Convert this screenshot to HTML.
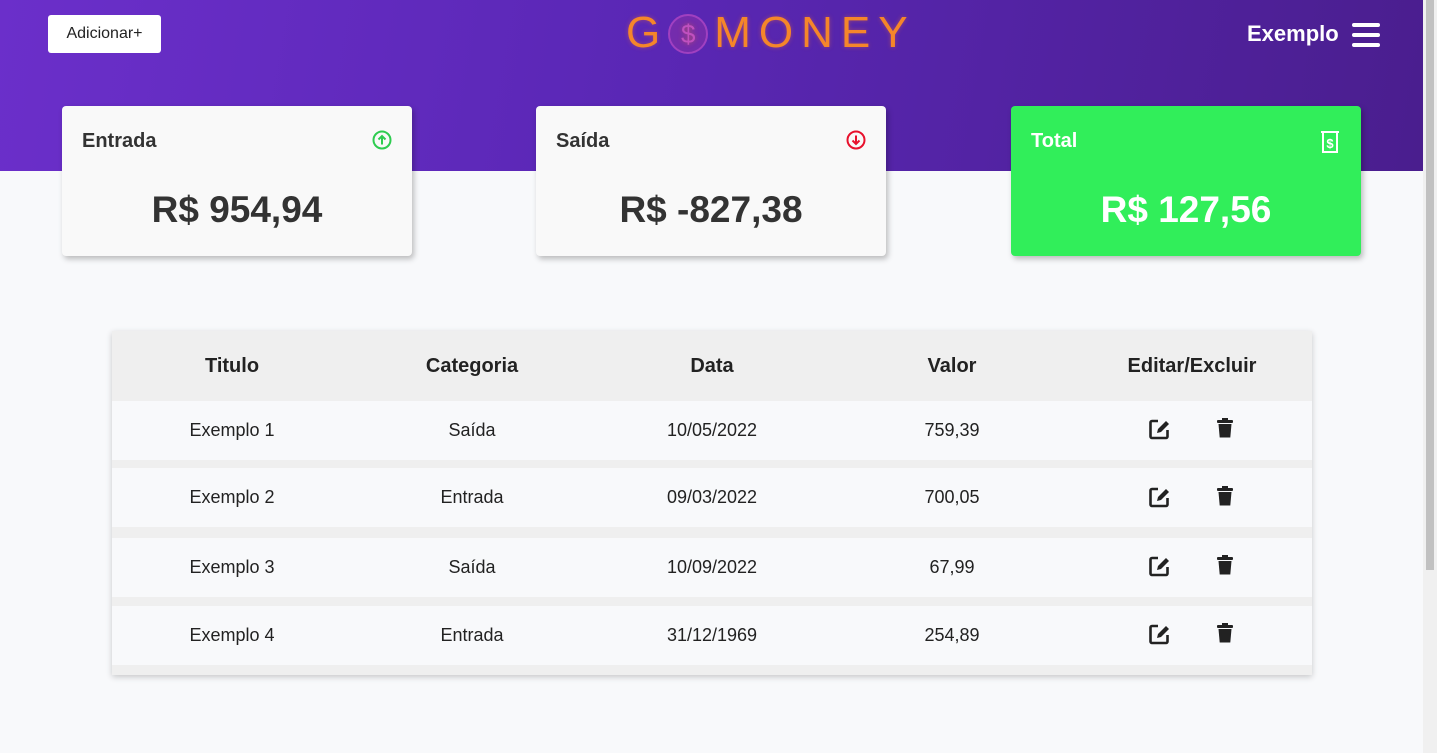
<!DOCTYPE html>
<html><head><meta charset="utf-8"><style>
*{box-sizing:border-box;margin:0;padding:0}
body{width:1437px;height:753px;overflow:hidden;background:#f8f9fb;font-family:"Liberation Sans",sans-serif;color:#222;position:relative}
.hdr{position:absolute;left:0;top:0;width:1423px;height:171px;background:linear-gradient(100deg,#6b2fca 0%,#5a27b5 45%,#4a1e8e 100%)}
.sb{position:absolute;right:0;top:0;width:14px;height:753px;background:#f0f0f0}
.sb div{position:absolute;left:3px;top:0;width:8px;height:570px;background:#c1c1c1}
.btn{position:absolute;left:48px;top:15px;width:113px;height:38px;background:#fff;border-radius:3px;font-size:16px;line-height:38px;text-align:center;color:#222}
.logo{position:absolute;left:626px;top:8px;font-size:44px;letter-spacing:8px;color:#f5862a;text-shadow:0 0 5px rgba(255,120,40,.4);white-space:nowrap}
.user{position:absolute;left:1247px;top:21px;color:#fff;font-size:22px;font-weight:bold}
.ham{position:absolute;left:1352px;top:23px;width:28px}
.ham i{display:block;height:4px;background:#fff;border-radius:2px;margin-bottom:6px}
.card{position:absolute;top:106px;width:350px;height:150px;background:#f9f9f9;border-radius:4px;box-shadow:2px 3px 6px rgba(0,0,0,.25)}
.card .t{position:absolute;left:20px;top:24px;font-size:20px;font-weight:bold;color:#333}
.card .v{position:absolute;left:0;width:100%;top:83px;text-align:center;font-size:37px;font-weight:bold;color:#333}
.card svg{position:absolute;right:20px;top:24px}
.tbl{position:absolute;left:112px;top:331px;width:1200px;height:344px;background:#efefef;box-shadow:0 2px 6px rgba(0,0,0,.2)}
.row{position:absolute;left:0;width:1200px;height:59px;background:#f8f9fb;display:flex}
.row div,.th div{width:240px;text-align:center;line-height:59px;font-size:18px;color:#222}
.th{position:absolute;left:0;top:0;width:1200px;height:70px;display:flex}
.th div{line-height:70px;font-weight:bold;font-size:20px}
.ic{position:absolute}
</style></head><body>
<div class="hdr"></div>
<div class="sb"><div></div></div>
<div class="btn">Adicionar+</div>
<div class="logo">G<span style="display:inline-block;width:40px;height:40px;border:2px solid #a040c0;border-radius:50%;font-size:26px;text-align:center;line-height:36px;color:#c050c0;letter-spacing:0;vertical-align:4px;background:rgba(200,60,150,.25);margin-right:6px">$</span>MONEY</div>
<div class="user">Exemplo</div>
<div class="ham"><i></i><i></i><i></i></div>

<div class="card" style="left:62px"><div class="t">Entrada</div>
<svg width="20" height="20" viewBox="0 0 20 20"><circle cx="10" cy="10" r="8.5" fill="none" stroke="#2ecc50" stroke-width="2"/><path d="M10 14.5V6M6.5 9.5L10 6l3.5 3.5" fill="none" stroke="#2ecc50" stroke-width="2"/></svg>
<div class="v">R$ 954,94</div></div>
<div class="card" style="left:536px"><div class="t">Saída</div>
<svg width="20" height="20" viewBox="0 0 20 20"><circle cx="10" cy="10" r="8.5" fill="none" stroke="#e8112d" stroke-width="2"/><path d="M10 5.5V14M6.5 10.5L10 14l3.5-3.5" fill="none" stroke="#e8112d" stroke-width="2"/></svg>
<div class="v">R$ -827,38</div></div>
<div class="card" style="left:1011px;background:#31ee5a"><div class="t" style="color:#fff">Total</div>
<svg width="22" height="24" viewBox="0 0 22 24"><path d="M2 2h18M4 2v20h14V2" fill="none" stroke="#fff" stroke-width="2"/><text x="11" y="18" font-size="13" font-weight="bold" fill="#fff" text-anchor="middle" font-family="Liberation Sans">$</text></svg>
<div class="v" style="color:#fff">R$ 127,56</div></div>

<div class="tbl">
<div class="th"><div>Titulo</div><div>Categoria</div><div>Data</div><div>Valor</div><div>Editar/Excluir</div></div>
<div class="row" style="top:70px"><div>Exemplo 1</div><div>Saída</div><div>10/05/2022</div><div>759,39</div><div></div></div>
<div class="row" style="top:137px"><div>Exemplo 2</div><div>Entrada</div><div>09/03/2022</div><div>700,05</div><div></div></div>
<div class="row" style="top:207px"><div>Exemplo 3</div><div>Saída</div><div>10/09/2022</div><div>67,99</div><div></div></div>
<div class="row" style="top:275px"><div>Exemplo 4</div><div>Entrada</div><div>31/12/1969</div><div>254,89</div><div></div></div>
</div>
<svg width="0" height="0" style="position:absolute"><defs>
<g id="ed"><path d="M10 3H4a1.5 1.5 0 0 0-1.5 1.5v14A1.5 1.5 0 0 0 4 20h14a1.5 1.5 0 0 0 1.5-1.5V12" fill="none" stroke="#222" stroke-width="2.6"/><path d="M9 15l1-4 8-8 3 3-8 8z" fill="#222"/></g>
<g id="tr"><rect x="2" y="3" width="16" height="3" rx="1" fill="#222"/><rect x="7" y="1" width="6" height="3" fill="#222"/><path d="M3.5 7h13l-1.2 13.5H4.7z" fill="#222"/></g>
</defs></svg>
<svg class="ic" style="left:1148px;top:418px" width="24" height="24" viewBox="0 0 24 24"><use href="#ed"/></svg>
<svg class="ic" style="left:1215px;top:417px" width="20" height="24" viewBox="0 0 20 24"><use href="#tr"/></svg>
<svg class="ic" style="left:1148px;top:486px" width="24" height="24" viewBox="0 0 24 24"><use href="#ed"/></svg>
<svg class="ic" style="left:1215px;top:485px" width="20" height="24" viewBox="0 0 20 24"><use href="#tr"/></svg>
<svg class="ic" style="left:1148px;top:555px" width="24" height="24" viewBox="0 0 24 24"><use href="#ed"/></svg>
<svg class="ic" style="left:1215px;top:554px" width="20" height="24" viewBox="0 0 20 24"><use href="#tr"/></svg>
<svg class="ic" style="left:1148px;top:623px" width="24" height="24" viewBox="0 0 24 24"><use href="#ed"/></svg>
<svg class="ic" style="left:1215px;top:622px" width="20" height="24" viewBox="0 0 20 24"><use href="#tr"/></svg>
</body></html>
